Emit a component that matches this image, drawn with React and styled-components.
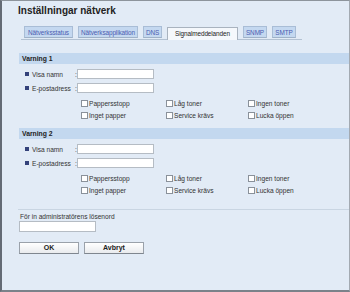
import React from "react"
import styled, { createGlobalStyle } from "styled-components"

const Global = createGlobalStyle`
  body {
    margin: 0;
    font-family: "Liberation Sans", Arial, sans-serif;
  }
`

const Frame = styled.div`
  width: 350px;
  height: 292px;
  box-sizing: border-box;
  background: #e2ebf6;
  border-left: 2px solid #646b75;
  border-top: 1px solid #8d949c;
  border-right: 1px solid #a3aab2;
  border-bottom: 2px solid #7b828a;
  overflow: hidden;
`

const Title = styled.h1`
  margin: 0;
  padding: 4px 0 0 16px;
  font-size: 10px;
  line-height: 12px;
  font-weight: bold;
  color: #222;
`

const TabBar = styled.div`
  display: flex;
  align-items: flex-end;
  gap: 5px;
  width: 278px;
  height: 13px;
  margin: 9px 0 0 19px;
  padding-left: 3px;
  border-bottom: 1px solid #b3c2d3;
`

const Tab = styled.div`
  box-sizing: border-box;
  width: ${(p) => p.$w}px;
  height: ${(p) => (p.$active ? "13px" : "12px")};
  line-height: 11px;
  text-align: center;
  font-size: 6.4px;
  color: ${(p) => (p.$active ? "#222" : "#4b5cb0")};
  background: ${(p) => (p.$active ? "#f5f8fc" : "#c4d8f0")};
  border: 1px solid ${(p) => (p.$active ? "#a9b3bf" : "#a9bdd6")};
  border-bottom: ${(p) => (p.$active ? "none" : "1px solid #9fb2c8")};
  margin-bottom: ${(p) => (p.$active ? "-1px" : "1px")};
  white-space: nowrap;
  letter-spacing: -0.1px;
`

const SectionHead = styled.div`
  margin: ${(p) => p.$top}px 0 0 17px;
  height: 11px;
  line-height: 11px;
  padding-left: 3px;
  background: #c3d8ef;
  font-size: 6.8px;
  font-weight: bold;
  color: #222;
`

const Fields = styled.div`
  display: flex;
  flex-direction: column;
  gap: 4px;
  padding: 5px 0 0 23px;
`

const FieldRow = styled.div`
  display: flex;
  align-items: center;
  height: 10px;
`

const Bullet = styled.span`
  width: 4px;
  height: 4px;
  margin-right: 3px;
  background: #34427a;
`

const Label = styled.span`
  width: 43px;
  font-size: 6.6px;
  color: #333;
`

const Colon = styled.span`
  width: 2px;
  font-size: 6.6px;
  color: #333;
`

const Input = styled.div`
  box-sizing: border-box;
  width: 77px;
  height: ${(p) => p.$h || 10}px;
  background: #fff;
  border: 1px solid #b5bcc4;
  margin-left: ${(p) => p.$left || 0}px;
`

const Checks = styled.div`
  display: grid;
  grid-template-columns: 85px 82px auto;
  row-gap: 5px;
  margin: 7px 0 0 79px;
`

const Check = styled.label`
  display: flex;
  align-items: center;
  gap: 1px;
  height: 7px;
  font-size: 6.6px;
  color: #333;
`

const Box = styled.span`
  box-sizing: border-box;
  width: 7px;
  height: 7px;
  background: #fff;
  border: 1px solid #8a919a;
`

const Rule = styled.div`
  margin: 15px 0 0 16px;
  border-top: 1px solid #c9d5e2;
`

const PassLabel = styled.div`
  margin: 3px 0 0 18px;
  font-size: 6.6px;
  line-height: 8px;
  color: #333;
`

const Buttons = styled.div`
  display: flex;
  gap: 5px;
  margin: 10px 0 0 17px;
`

const Button = styled.div`
  box-sizing: border-box;
  width: 60px;
  height: 12px;
  line-height: 10px;
  text-align: center;
  font-size: 7px;
  font-weight: bold;
  color: #222;
  background: linear-gradient(#ffffff, #e9ebee);
  border: 1px solid #9aa1aa;
  border-bottom-color: #7f868f;
`

const tabs = [
  ["Nätverksstatus", 49],
  ["Nätverksapplikation", 60],
  ["DNS", 19],
  ["Signalmeddelanden", 71],
  ["SNMP", 24],
  ["SMTP", 24],
]

const checks = [
  "Pappersstopp",
  "Låg toner",
  "Ingen toner",
  "Inget papper",
  "Service krävs",
  "Lucka öppen",
]

const Warning = ({ title, top }) => (
  <>
    <SectionHead $top={top}>{title}</SectionHead>
    <Fields>
      <FieldRow>
        <Bullet />
        <Label>Visa namn</Label>
        <Colon>:</Colon>
        <Input />
      </FieldRow>
      <FieldRow>
        <Bullet />
        <Label>E-postadress</Label>
        <Colon>:</Colon>
        <Input />
      </FieldRow>
    </Fields>
    <Checks>
      {checks.map((c) => (
        <Check key={c}>
          <Box />
          {c}
        </Check>
      ))}
    </Checks>
  </>
)

const App = () => (
  <Frame>
    <Global />
    <Title>Inställningar nätverk</Title>
    <TabBar>
      {tabs.map(([t, w]) => (
        <Tab key={t} $w={w} $active={t === "Signalmeddelanden"}>
          {t}
        </Tab>
      ))}
    </TabBar>
    <Warning title="Varning 1" top={13} />
    <Warning title="Varning 2" top={9} />
    <Rule />
    <PassLabel>För in administratörens lösenord</PassLabel>
    <Input $h={11} $left={17} />
    <Buttons>
      <Button>OK</Button>
      <Button>Avbryt</Button>
    </Buttons>
  </Frame>
)

export default App
